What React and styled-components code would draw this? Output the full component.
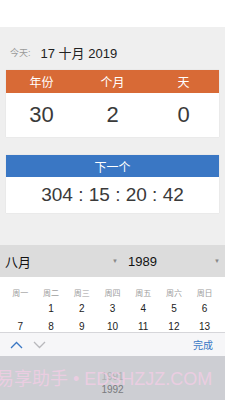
import styled, { createGlobalStyle } from "styled-components";

const GlobalStyle = createGlobalStyle`
  body {
    margin: 0;
    font-family: "Liberation Sans", "Noto Sans CJK SC", sans-serif;
    background: #ffffff;
  }
`;

const WEEKDAYS = ["周一", "周二", "周三", "周四", "周五", "周六", "周日"];
const WEEKS = [
  ["", "1", "2", "3", "4", "5", "6"],
  ["7", "8", "9", "10", "11", "12", "13"],
];

const Chevron = ({ up, color }) => (
  <svg width="13" height="8" viewBox="0 0 13 8">
    <polyline
      points={up ? "1,7 6.5,1.5 12,7" : "1,1 6.5,6.5 12,1"}
      fill="none"
      stroke={color}
      strokeWidth="1.3"
    />
  </svg>
);

const App = () => {
  return (
    <>
      <GlobalStyle />
      <Page>
        <TopBar />
        <Main>
          <TodayRow>
            <TodayLabel>今天:</TodayLabel>
            <TodayDate>17 十月 2019</TodayDate>
          </TodayRow>

          <Card>
            <CardHead color="#d86a36">
              <Cell>年份</Cell>
              <Cell>个月</Cell>
              <Cell>天</Cell>
            </CardHead>
            <ValueRow>
              <Cell>30</Cell>
              <Cell>2</Cell>
              <Cell>0</Cell>
            </ValueRow>
          </Card>

          <Card gap="18px">
            <CardHead color="#3a77c4" height="22px">
              <Cell>下一个</Cell>
            </CardHead>
            <Countdown>304 : 15 : 20 : 42</Countdown>
          </Card>
        </Main>

        <CalHeader>
          <SelectBox>
            <span>八月</span>
            <Caret>▼</Caret>
          </SelectBox>
          <SelectBox>
            <span>1989</span>
            <Caret>▼</Caret>
          </SelectBox>
        </CalHeader>

        <CalBody>
          <WeekRow>
            {WEEKDAYS.map((d) => (
              <WeekDay key={d}>{d}</WeekDay>
            ))}
          </WeekRow>
          {WEEKS.map((week, i) => (
            <DateRow key={i}>
              {week.map((d, j) => (
                <DateCell key={j}>{d}</DateCell>
              ))}
            </DateRow>
          ))}
        </CalBody>

        <Toolbar>
          <Arrows>
            <Chevron up color="#3a77c4" />
            <Chevron color="#b8b8bc" />
          </Arrows>
          <Done>完成</Done>
        </Toolbar>

        <Picker>
          <PickerItem faded>1991</PickerItem>
          <PickerItem>1992</PickerItem>
          <Watermark>易享助手 • EDSHZJZ.COM</Watermark>
        </Picker>
      </Page>
    </>
  );
};

export default App;

const Page = styled.div`
  width: 225px;
  height: 400px;
  overflow: hidden;
  display: flex;
  flex-direction: column;
`;

const TopBar = styled.div`
  height: 27px;
  flex-shrink: 0;
  background: #ffffff;
`;

const Main = styled.div`
  height: 218px;
  flex-shrink: 0;
  background: #efefef;
  padding: 0 6px;
  box-sizing: border-box;
`;

const TodayRow = styled.div`
  display: flex;
  align-items: center;
  height: 36px;
  margin-top: 7px;
  padding-left: 4px;
  gap: 10px;
`;

const TodayLabel = styled.span`
  font-size: 9px;
  color: #9a9a9a;
`;

const TodayDate = styled.span`
  font-size: 13px;
  color: #222222;
`;

const Card = styled.div`
  background: #ffffff;
  margin-top: ${({ gap }) => gap || "0"};
  box-shadow: 0 0 1px rgba(0, 0, 0, 0.12);
`;

const CardHead = styled.div`
  display: flex;
  align-items: center;
  height: ${({ height }) => height || "23px"};
  background: ${({ color }) => color};
  color: #ffffff;
  font-size: 12px;
`;

const Cell = styled.div`
  flex: 1;
  text-align: center;
`;

const ValueRow = styled.div`
  display: flex;
  align-items: center;
  height: 44px;
  font-size: 22px;
  color: #3a3a3a;
`;

const Countdown = styled.div`
  height: 36px;
  display: flex;
  align-items: center;
  justify-content: center;
  font-size: 19px;
  color: #3a3a3a;
`;

const CalHeader = styled.div`
  height: 32px;
  flex-shrink: 0;
  display: grid;
  grid-template-columns: 123px 1fr;
  background: #dcdcdc;
`;

const SelectBox = styled.div`
  display: flex;
  align-items: center;
  justify-content: space-between;
  padding: 0 5px;
  font-size: 13px;
  color: #111111;
`;

const Caret = styled.span`
  font-size: 6px;
  color: #888888;
`;

const CalBody = styled.div`
  height: 55px;
  flex-shrink: 0;
  overflow: hidden;
  background: #ffffff;
  padding: 8px 5px 0;
  box-sizing: border-box;
`;

const WeekRow = styled.div`
  display: grid;
  grid-template-columns: repeat(7, 1fr);
  height: 14px;
  align-items: center;
`;

const WeekDay = styled.div`
  text-align: center;
  font-size: 8px;
  color: #a0a0a0;
`;

const DateRow = styled.div`
  display: grid;
  grid-template-columns: repeat(7, 1fr);
  height: 18px;
  align-items: center;
`;

const DateCell = styled.div`
  text-align: center;
  font-size: 10px;
  color: #222222;
`;

const Toolbar = styled.div`
  height: 23px;
  flex-shrink: 0;
  display: flex;
  align-items: center;
  justify-content: space-between;
  padding: 0 12px 0 10px;
  background: #f6f6f8;
  border-top: 1px solid #d6d6da;
`;

const Arrows = styled.div`
  display: flex;
  align-items: center;
  gap: 10px;
`;

const Done = styled.span`
  font-size: 10px;
  color: #3a77c4;
`;

const Picker = styled.div`
  position: relative;
  flex: 1;
  background: #cdced3;
  display: flex;
  flex-direction: column;
  align-items: center;
  padding-top: 14px;
  overflow: hidden;
`;

const PickerItem = styled.div`
  font-size: 10px;
  line-height: 13px;
  color: ${({ faded }) => (faded ? "#b0b0b4" : "#7a7a7e")};
`;

const Watermark = styled.div`
  position: absolute;
  left: -4px;
  top: 8px;
  white-space: nowrap;
  font-size: 18px;
  color: rgba(255, 205, 235, 0.6);
`;
